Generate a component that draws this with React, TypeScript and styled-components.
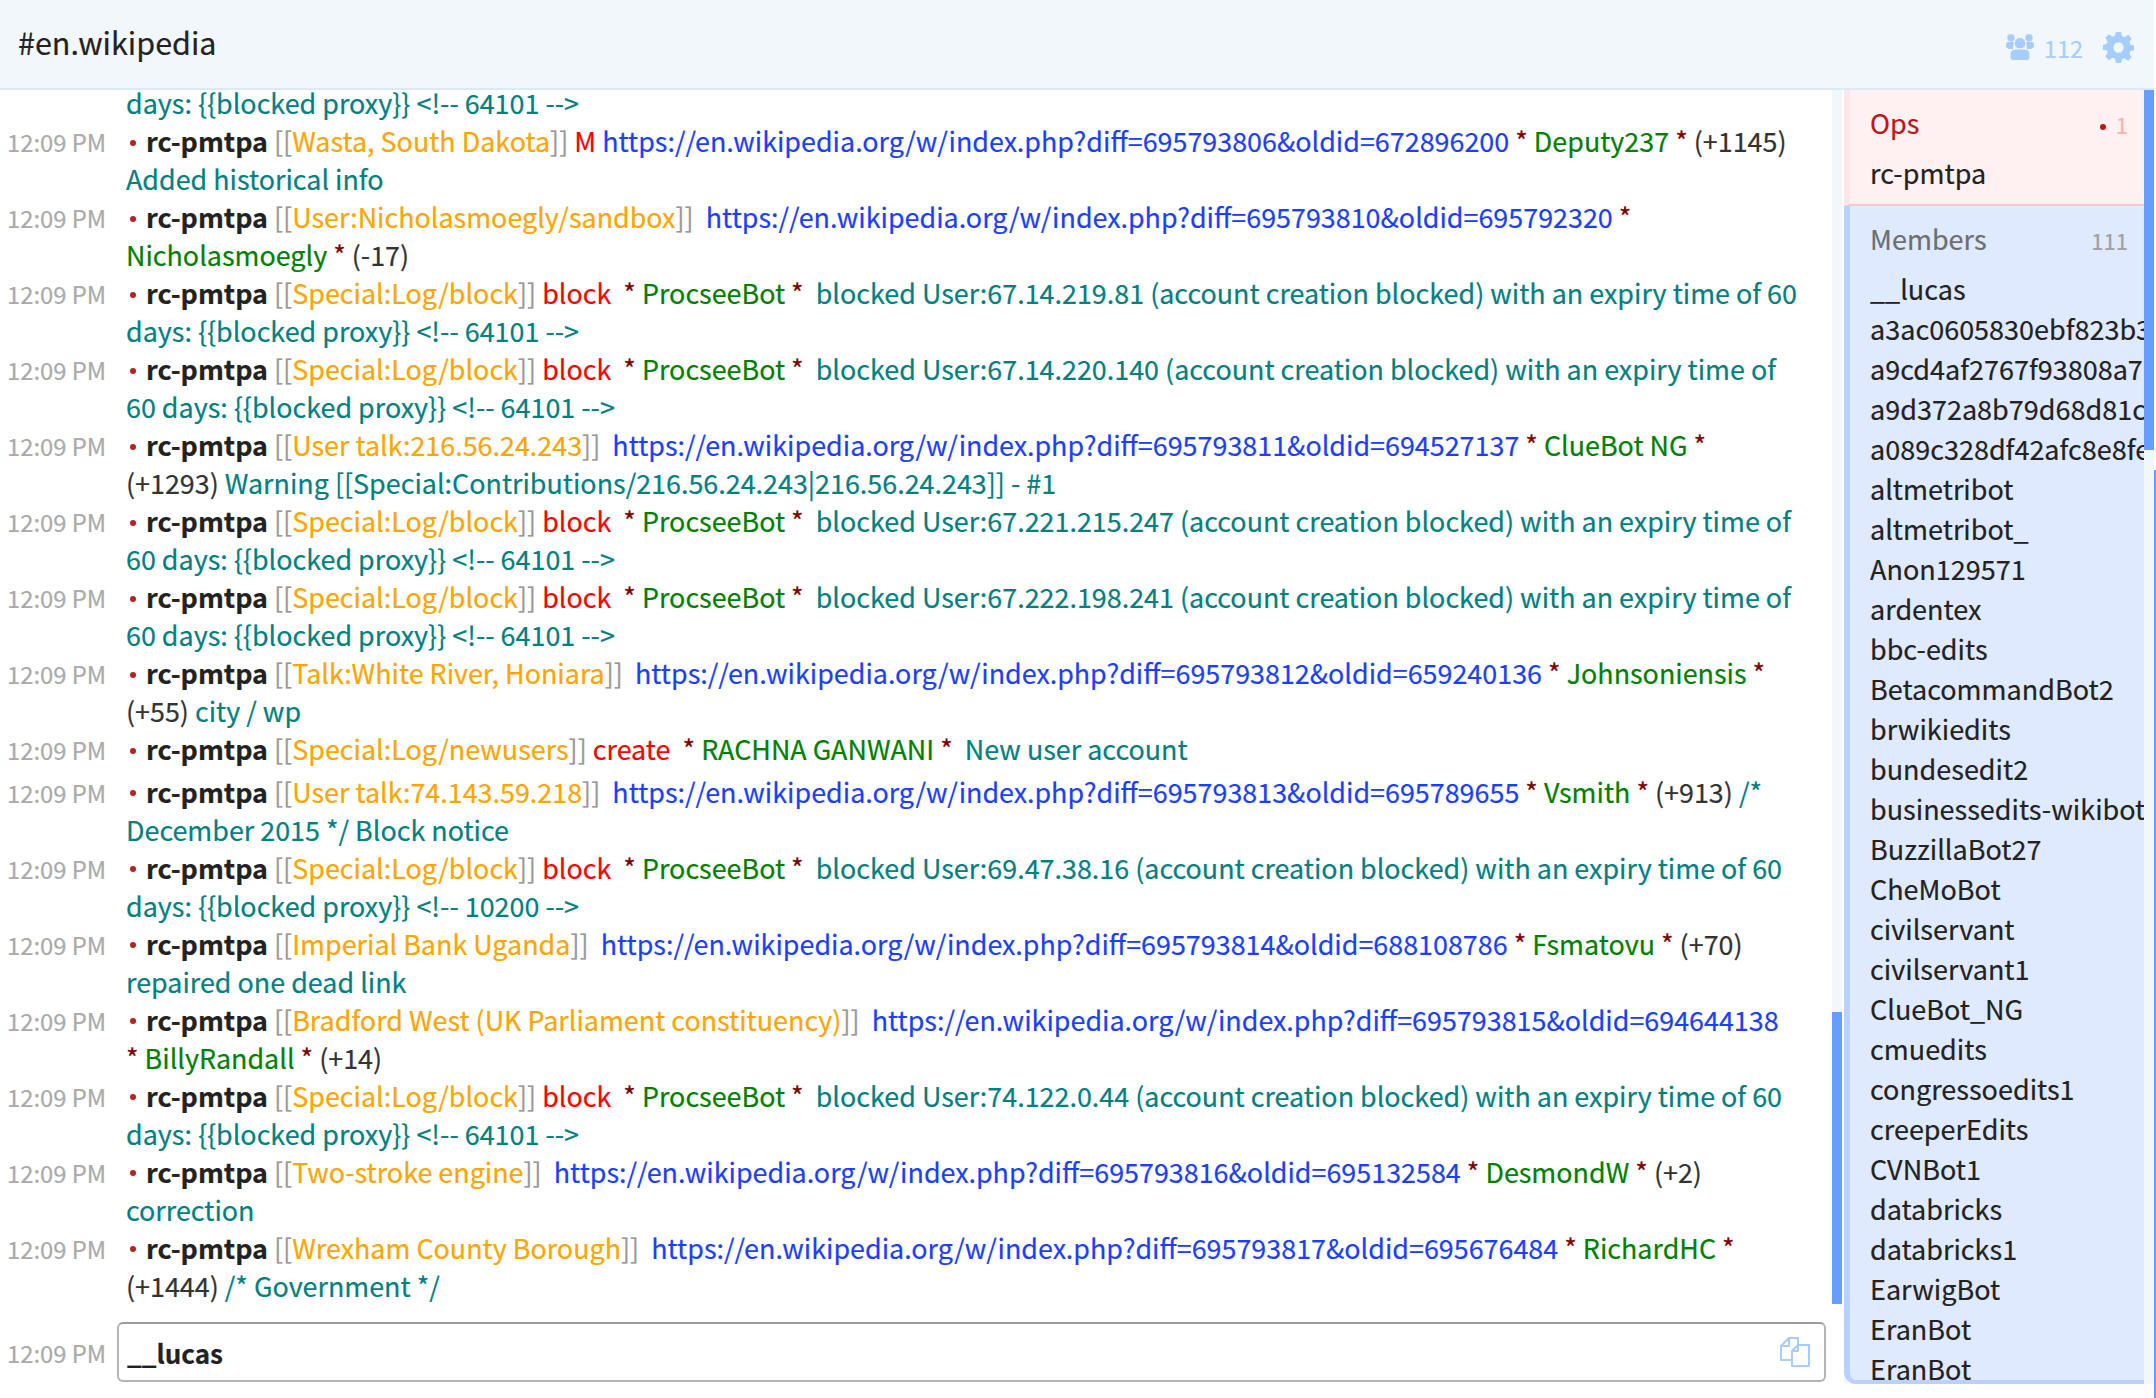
import React from "react";
import styled, { createGlobalStyle } from "styled-components";

const Global = createGlobalStyle`
  html, body { margin: 0; padding: 0; height: 100%; background: #fff; overflow: hidden; }
  body { font-family: "Noto Sans CJK SC", "Noto Sans CJK JP", "Liberation Sans", sans-serif; }
`;

const Page = styled.div`
  width: 2156px;
  height: 1398px;
  display: flex;
  flex-direction: column;
  overflow: hidden;
  position: relative;
  background: #fff;
  color: #222;
  font-size: 27px;
  -webkit-text-stroke: 0.2px currentColor;
`;
const EdgeLine = styled.div`
  position: absolute;
  right: 0;
  top: 470px;
  bottom: 0;
  width: 2px;
  background: #659eff;
`;
const Header = styled.header`
  flex: 0 0 90px;
  box-sizing: border-box;
  border-bottom: 2px solid #dbe9fd;
  background: #f2f7fc;
  display: flex;
  align-items: center;
  justify-content: space-between;
  padding: 0 20px 4px 18px;
  margin-right: 2px;
`;
const Title = styled.h1`
  margin: 0;
  font-size: 30.5px;
  font-weight: 400;
  color: #222;
`;
const HeaderTools = styled.div`
  display: flex;
  align-items: center;
  gap: 20px;
  margin-top: 11px;
  color: #a6cdff;
  font-size: 23.5px;
`;
const Count = styled.span`
  display: flex;
  align-items: center;
  gap: 10px;
`;
const Body = styled.div`
  flex: 0 0 1294px;
  min-height: 0;
  display: flex;
`;
const Main = styled.main`
  flex: 0 0 1844px;
  min-width: 0;
  display: flex;
  flex-direction: column;
`;
const Log = styled.div`
  flex: 1;
  min-height: 0;
  overflow: hidden;
  padding-right: 41px;
  position: relative;
`;
const LogInner = styled.div`
  margin-top: -6px;
`;
const Row = styled.div`
  display: grid;
  grid-template-columns: 126px 1fr;
  line-height: 38px;
  min-height: 42.6px;
`;
const TailRow = styled(Row)`
  min-height: 0;
`;
const Time = styled.div`
  color: #aaa;
  font-size: 23.8px;
  padding: 1px 0 0 7px;
  white-space: nowrap;
`;
const Text = styled.div`
  min-width: 0;
  color: #333;
  font-size: 26.9px;
  white-space: pre-wrap;
`;
const Dot = styled.span`
  display: inline-block;
  width: 6px;
  height: 6px;
  border-radius: 50%;
  background: #bf1e1e;
  margin: 0 10px 4px 4px;
  vertical-align: middle;
`;
const Nick = styled.b`
  font-weight: 700;
  color: #222;
`;
const Brk = styled.span` color: #999; `;
const PageName = styled.span` color: #ffa500; `;
const Red = styled.span` color: #f00; `;
const Url = styled.span` color: #1c3fff; `;
const Star = styled.span` color: #800000; `;
const User = styled.span` color: #008000; `;
const Teal = styled.span` color: #008080; `;
const Track = styled.div`
  position: absolute;
  right: 2px;
  top: 0;
  width: 10px;
  height: 1214px;
  background: #f2f7fc;
`;
const Thumb = styled.div`
  position: absolute;
  left: 0;
  top: 922px;
  width: 10px;
  height: 292px;
  background: #659eff;
`;
const InputRow = styled.div`
  flex: 0 0 auto;
  display: grid;
  grid-template-columns: 117px 1fr;
  align-items: center;
  height: 60px;
  margin: 0 18px 2px 0;
`;
const InputBox = styled.div`
  height: 60px;
  box-sizing: border-box;
  border: 2px solid #b4b4b4;
  border-top-color: #9c9c9c;
  border-radius: 6px;
  display: flex;
  align-items: center;
  justify-content: space-between;
  padding: 0 14px 0 8px;
  font-size: 26px;
  font-weight: 700;
  color: #222;
`;
const Side = styled.aside`
  flex: 0 0 310px;
  height: 1294px;
  display: flex;
  flex-direction: column;
  overflow: hidden;
  position: relative;
  background: #f2f7fc;
`;
const Section = styled.section<{ $tone: "ops" | "members" }>`
  padding: 11px 0 0 20px;
  height: ${(p) => (p.$tone === "ops" ? "116px" : "auto")};
  box-sizing: border-box;
  background: ${(p) => (p.$tone === "ops" ? "#fff1f1" : "#dfeafe")};
  border-bottom: ${(p) => (p.$tone === "ops" ? "2px solid #fbc8c8" : "4px solid #b9d1fd")};
  border-left: ${(p) => (p.$tone === "ops" ? "6px solid #ffe6e6" : "6px solid #b9d1fd")};
  border-bottom-left-radius: ${(p) => (p.$tone === "ops" ? "0" : "12px")};
  margin-right: ${(p) => (p.$tone === "ops" ? "10px" : "0")};
  flex: ${(p) => (p.$tone === "ops" ? "0 0 auto" : "1")};
  min-height: 0;
  overflow: hidden;
`;
const SectionHead = styled.div<{ $tone: "ops" | "members" }>`
  display: flex;
  justify-content: space-between;
  align-items: baseline;
  line-height: 44px;
  height: 52px;
  padding-right: ${(p) => (p.$tone === "ops" ? "16px" : "26px")};
  color: ${(p) => (p.$tone === "ops" ? "#bf1515" : "#6e6e6e")};
`;
const SectionCount = styled.span<{ $tone: "ops" | "members" }>`
  font-size: 22px;
  color: ${(p) => (p.$tone === "ops" ? "#ffb0b0" : "#a0a0a0")};
`;
const OpsDot = styled.span`
  display: inline-block;
  width: 6px;
  height: 6px;
  border-radius: 50%;
  background: #bf1515;
  margin: 0 10px 3px 0;
  vertical-align: middle;
`;
const Name = styled.div`
  line-height: 40px;
  color: #222;
  white-space: nowrap;
`;
const MembersClip = styled.div`
  overflow: hidden;
  width: 274px;
`;
const SideTrack = styled.div`
  position: absolute;
  right: 0;
  top: 0;
  bottom: 0;
  width: 10px;
  background: #f2f7fc;
`;
const SideThumb = styled.div`
  width: 12px;
  height: 360px;
  background: #659eff;
`;

const GroupIcon = () => (
  <svg width="28" height="27" viewBox="0 0 28 27" fill="#a6cdff">
    <circle cx="5" cy="3.8" r="3.7" />
    <circle cx="23" cy="3.8" r="3.7" />
    <path d="M0 10.5Q0 8 2.5 8h5.5L7 15H2.5L0 13zM28 10.5Q28 8 25.5 8H20l1 7h4.5l2.5-2z" />
    <g stroke="#f2f7fc" strokeWidth="1">
      <circle cx="14" cy="9.3" r="5.8" />
      <path d="M10 15h8q6 0 6 6v2.5q0 3-3.5 3h-13q-3.5 0-3.5-3V21q0-6 6-6z" />
    </g>
  </svg>
);
const GearIcon = () => (
  <svg width="31" height="31" viewBox="0 0 24 24" fill="#a6cdff" fillRule="evenodd">
    <path d="M10 0h4l.7 3.3 1.9.8L19.5 2.2l2.8 2.8-1.9 2.9.8 1.9L24 10.5v3.6l-2.8.6-.8 1.9 1.9 2.9-2.8 2.8-2.9-1.9-1.9.8L14 24h-4l-.7-3.3-1.9-.8-2.9 1.9-2.8-2.8 1.9-2.9-.8-1.9L0 14v-4l2.8-.7.8-1.9L1.7 4.5l2.8-2.8 2.9 1.9 1.9-.8zM12 8a4 4 0 1 0 0 8 4 4 0 0 0 0-8z" />
  </svg>
);
const PasteIcon = () => (
  <svg width="30" height="30" viewBox="0 0 30 30" fill="none" stroke="#a9ccff" strokeWidth="2" strokeLinejoin="round">
    <path d="M12 23H1V9l8-8h9v7" /><path d="M1 9h8V1" />
    <path d="M12 29V14l6-6h11v21z" /><path d="M12 14h6V8" />
  </svg>
);

const P = (t: string) => <><Brk>[[</Brk><PageName>{t}</PageName><Brk>]]</Brk></>;
const U = (d: string, o: string) => <Url>https://en.wikipedia.org/w/index.php?diff={d}&amp;oldid={o}</Url>;
const S = () => <Star>*</Star>;
const Pre = () => <><Dot /><Nick>rc-pmtpa</Nick> </>;
const Block = (ip: string, tail: string) => (
  <>
    <Pre />{P("Special:Log/block")} <Red>block</Red>{"  "}<S /> <User>ProcseeBot</User> <S />{"  "}
    <Teal>blocked User:{ip} (account creation blocked) with an expiry time of {tail}</Teal>
  </>
);
const T = (n: string) => `60 days: {{blocked proxy}} <!-- ${n} -->`;

const rows: React.ReactNode[] = [
  <><Pre />{P("Wasta, South Dakota")} <Red>M</Red> {U("695793806", "672896200")} <S /> <User>Deputy237</User> <S /> (+1145) <Teal>Added historical info</Teal></>,
  <><Pre />{P("User:Nicholasmoegly/sandbox")}{"  "}{U("695793810", "695792320")} <S /> <User>Nicholasmoegly</User> <S /> (-17)</>,
  Block("67.14.219.81", T("64101")),
  Block("67.14.220.140", T("64101")),
  <><Pre />{P("User talk:216.56.24.243")}{"  "}{U("695793811", "694527137")} <S /> <User>ClueBot NG</User> <S /> (+1293) <Teal>Warning [[Special:Contributions/216.56.24.243|216.56.24.243]] - #1</Teal></>,
  Block("67.221.215.247", T("64101")),
  Block("67.222.198.241", T("64101")),
  <><Pre />{P("Talk:White River, Honiara")}{"  "}{U("695793812", "659240136")} <S /> <User>Johnsoniensis</User> <S /> (+55) <Teal>city / wp</Teal></>,
  <><Pre />{P("Special:Log/newusers")} <Red>create</Red>{"  "}<S /> <User>RACHNA GANWANI</User> <S />{"  "}<Teal>New user account</Teal></>,
  <><Pre />{P("User talk:74.143.59.218")}{"  "}{U("695793813", "695789655")} <S /> <User>Vsmith</User> <S /> (+913) <Teal>/* December 2015 */ Block notice</Teal></>,
  Block("69.47.38.16", T("10200")),
  <><Pre />{P("Imperial Bank Uganda")}{"  "}{U("695793814", "688108786")} <S /> <User>Fsmatovu</User> <S /> (+70) <Teal>repaired one dead link</Teal></>,
  <><Pre />{P("Bradford West (UK Parliament constituency)")}{"  "}{U("695793815", "694644138")}{"\n"}<S /> <User>BillyRandall</User> <S /> (+14)</>,
  Block("74.122.0.44", T("64101")),
  <><Pre />{P("Two-stroke engine")}{"  "}{U("695793816", "695132584")} <S /> <User>DesmondW</User> <S /> (+2) <Teal>correction</Teal></>,
  <><Pre />{P("Wrexham County Borough")}{"  "}{U("695793817", "695676484")} <S /> <User>RichardHC</User> <S /> (+1444) <Teal>/* Government */</Teal></>,
];

const members = ["__lucas","a3ac0605830ebf823b3","a9cd4af2767f93808a7","a9d372a8b79d68d81c","a089c328df42afc8e8fe","altmetribot","altmetribot_","Anon129571","ardentex","bbc-edits","BetacommandBot2","brwikiedits","bundesedit2","businessedits-wikibot","BuzzillaBot27","CheMoBot","civilservant","civilservant1","ClueBot_NG","cmuedits","congressoedits1","creeperEdits","CVNBot1","databricks","databricks1","EarwigBot","EranBot","EranBot"];

export default function App() {
  return (
    <Page>
      <Global />
      <Header>
        <Title>#en.wikipedia</Title>
        <HeaderTools>
          <Count><GroupIcon />112</Count>
          <GearIcon />
        </HeaderTools>
      </Header>
      <Body>
        <Main>
          <Log>
            <LogInner>
              <TailRow>
                <span />
                <Text><Teal>days: {"{{blocked proxy}}"} {"<!-- 64101 -->"}</Teal></Text>
              </TailRow>
              {rows.map((r, i) => (
                <Row key={i}>
                  <Time>12:09 PM</Time>
                  <Text>{r}</Text>
                </Row>
              ))}
            </LogInner>
            <Track><Thumb /></Track>
          </Log>
          <InputRow>
            <Time>12:09 PM</Time>
            <InputBox>__lucas<PasteIcon /></InputBox>
          </InputRow>
        </Main>
        <Side>
          <Section $tone="ops">
            <SectionHead $tone="ops">Ops<SectionCount $tone="ops"><OpsDot />1</SectionCount></SectionHead>
            <Name>rc-pmtpa</Name>
          </Section>
          <Section $tone="members">
            <SectionHead $tone="members">Members<SectionCount $tone="members">111</SectionCount></SectionHead>
            <MembersClip>
              {members.map((m, i) => <Name key={i}>{m}</Name>)}
            </MembersClip>
          </Section>
          <SideTrack><SideThumb /></SideTrack>
        </Side>
      </Body>
      <EdgeLine />
    </Page>
  );
}
